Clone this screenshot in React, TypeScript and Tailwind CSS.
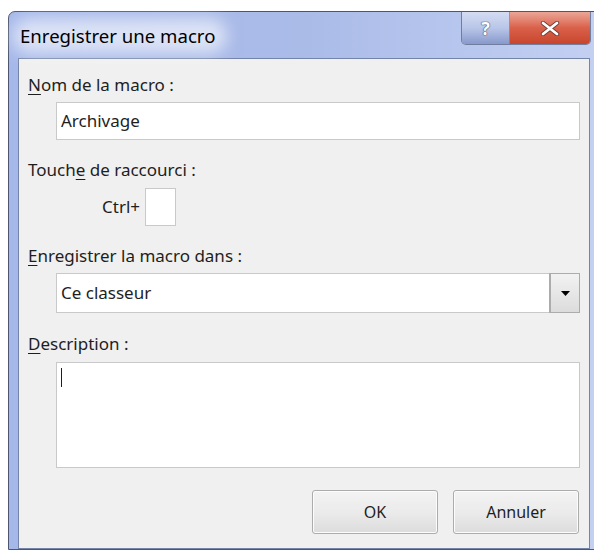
import { FC, ReactNode } from "react";

const font = "[font-family:'Noto_Sans','Open_Sans',sans-serif]";

type LabelProps = {
  accessKey: number;
  text: string;
};

// Label with the access-key letter underlined, Win32 style
const Label: FC<LabelProps> = ({ accessKey, text }) => (
  <span className="text-[17px] leading-6 text-[#1e1e1e]">
    {text.slice(0, accessKey)}
    <span className="underline underline-offset-[3px] decoration-1">
      {text[accessKey]}
    </span>
    {text.slice(accessKey + 1)}
  </span>
);

const DialogButton: FC<{ children: ReactNode }> = ({ children }) => (
  <button
    type="button"
    className="h-[44px] w-[126px] rounded-[3px] border border-[#acacac] bg-gradient-to-b from-[#f3f3f3] via-[#ebebeb] to-[#dcdcdc] text-[16px] text-[#1e1e1e] shadow-[inset_0_0_0_1px_#fcfcfc]"
  >
    {children}
  </button>
);

const TitleBar: FC = () => (
  <div className="relative flex h-[46px] items-start">
    <div className="absolute -left-[6px] top-[6px] h-[36px] w-[215px] rounded-full bg-white/60 blur-[8px]" />
    <span className="relative ml-[2px] mt-[11px] text-[18.6px] leading-[26px] text-black">
      Enregistrer une macro
    </span>
    <div className="ml-auto -mr-[1px] flex h-[33px] overflow-hidden rounded-b-[5px] border border-t-0 border-[#5f6b8a]/80">
      <div className="flex w-[48px] items-center justify-center border-r border-[#6e7ca3]/70 bg-gradient-to-b from-[#d4dcf2] via-[#b9c6e8] to-[#8899cb]">
        <span className="text-[18px] font-bold leading-none text-white [text-shadow:0_0_1px_#4a5472,0_0_1px_#4a5472,0_0_1px_#4a5472]">
          ?
        </span>
      </div>
      <div className="flex w-[80px] items-center justify-center bg-gradient-to-b from-[#eba597] via-[#d9604a] to-[#c8452c]">
        <svg width="20" height="15" viewBox="0 0 20 15" aria-hidden="true">
          <path
            d="M3 2 L17 13 M17 2 L3 13"
            stroke="#6d3a33"
            strokeWidth="4.4"
            strokeLinecap="round"
          />
          <path
            d="M3 2 L17 13 M17 2 L3 13"
            stroke="#ffffff"
            strokeWidth="2.8"
            strokeLinecap="round"
          />
        </svg>
      </div>
    </div>
  </div>
);

export default function App() {
  return (
    <div className={`h-[551px] w-[594px] overflow-hidden bg-white ${font}`}>
      <div className="ml-[8px] mt-[11px] w-[592px] rounded-tl-[7px] border border-[#4d5670] bg-gradient-to-r from-[#a6b8ea] via-[#aabbe8] to-[#c3d0f2] px-[9px]">
        <TitleBar />
        <div className="flex h-[491px] flex-col border border-[#7484a8] bg-[#f0f0f0] pl-[9px] pr-[9px]">
          <div className="mt-[14px] flex h-6">
            <Label accessKey={0} text="Nom de la macro :" />
          </div>
          <div className="ml-[28px] mt-[5px] flex h-[38px] items-center border border-[#c9c9c9] bg-white pl-[4px] text-[17px] text-[#1e1e1e]">
            Archivage
          </div>
          <div className="mt-[18px] flex h-6">
            <Label accessKey={5} text="Touche de raccourci :" />
          </div>
          <div className="mt-[6px] flex items-center">
            <span className="ml-[74px] text-[17px] text-[#1e1e1e]">Ctrl+</span>
            <div className="ml-[5px] h-[38px] w-[31px] border border-[#c9c9c9] bg-white" />
          </div>
          <div className="mt-[18px] flex h-6">
            <Label accessKey={0} text="Enregistrer la macro dans :" />
          </div>
          <div className="ml-[28px] mt-[5px] flex h-[40px] border border-[#c9c9c9] bg-white">
            <span className="flex flex-1 items-center pl-[4px] text-[17px] text-[#1e1e1e]">
              Ce classeur
            </span>
            <div className="flex w-[29px] items-center justify-center border-l border-[#acacac] bg-gradient-to-b from-[#f2f2f2] to-[#dcdcdc] outline outline-1 outline-[#acacac]">
              <svg width="9" height="5" viewBox="0 0 9 5" aria-hidden="true">
                <path d="M0 0 H9 L4.5 5 Z" fill="#000" />
              </svg>
            </div>
          </div>
          <div className="mt-[19px] flex h-6">
            <Label accessKey={0} text="Description :" />
          </div>
          <div className="ml-[28px] mt-[6px] h-[106px] border border-[#c9c9c9] bg-white pl-[4px] pt-[5px]">
            <div className="h-[19px] w-px bg-[#1e1e1e]" />
          </div>
          <div className="mt-[22px] flex justify-end gap-[15px] pr-[1px]">
            <DialogButton>OK</DialogButton>
            <DialogButton>Annuler</DialogButton>
          </div>
        </div>
      </div>
    </div>
  );
}
